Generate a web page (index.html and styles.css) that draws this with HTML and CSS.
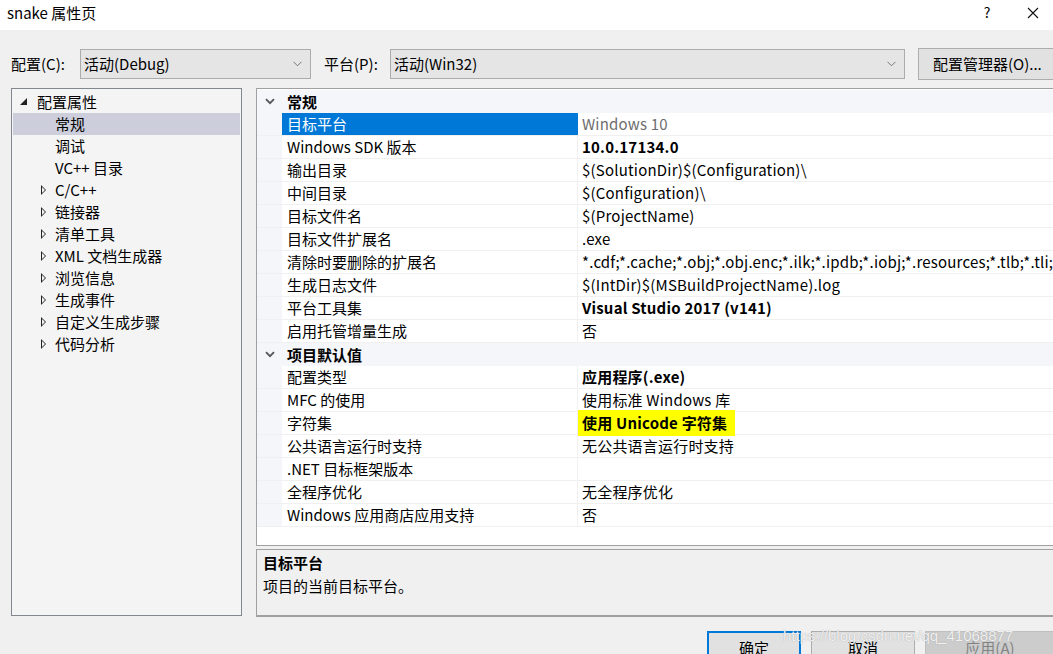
FILE: index.html
```html
<!doctype html>
<html>
<meta name="viewport" content="width=device-width, initial-scale=1">

<head>
  <title>snake 属性页</title>
  <link rel="stylesheet" href="styles.css">
</head>

<body>
  <div class="window">
    <div class="titlebar">
      <span class="title">snake 属性页</span>
      <span class="tb-help">?</span>
      <span class="tb-close">
        <svg width="12" height="12" viewBox="0 0 12 12"><path d="M1 1L11 11M11 1L1 11" stroke="#111" stroke-width="1.1" fill="none" /></svg>
      </span>
    </div>

    <div class="toolbar">
      <label class="lbl">配置(C):</label>
      <div class="combo combo-config">
        <span>活动(Debug)</span>
        <svg class="chev" width="9" height="6" viewBox="0 0 9 6"><path d="M0.5 0.8L4.5 4.8L8.5 0.8" stroke="#777" fill="none" /></svg>
      </div>
      <label class="lbl lbl-platform">平台(P):</label>
      <div class="combo combo-platform">
        <span>活动(Win32)</span>
        <svg class="chev" width="9" height="6" viewBox="0 0 9 6"><path d="M0.5 0.8L4.5 4.8L8.5 0.8" stroke="#777" fill="none" /></svg>
      </div>
      <button class="btn btn-manager">配置管理器(O)...</button>
    </div>

    <div class="main">
      <div class="tree">
        <div class="node root"><span class="tri-open"></span>配置属性</div>
        <div class="node leaf selected">常规</div>
        <div class="node leaf">调试</div>
        <div class="node leaf">VC++ 目录</div>
        <div class="node"><span class="tri"></span>C/C++</div>
        <div class="node"><span class="tri"></span>链接器</div>
        <div class="node"><span class="tri"></span>清单工具</div>
        <div class="node"><span class="tri"></span>XML 文档生成器</div>
        <div class="node"><span class="tri"></span>浏览信息</div>
        <div class="node"><span class="tri"></span>生成事件</div>
        <div class="node"><span class="tri"></span>自定义生成步骤</div>
        <div class="node"><span class="tri"></span>代码分析</div>
      </div>

      <div class="right">
        <div class="grid">
          <div class="cat">
            <span class="gut"><svg width="10" height="7" viewBox="0 0 10 7"><path d="M1 1.2L5 5.2L9 1.2" stroke="#555" stroke-width="1.8" fill="none" /></svg></span>
            <span class="cat-name">常规</span>
          </div>
          <div class="prop sel"><span class="gut"></span><span class="k">目标平台</span><span class="v dim">Windows 10</span></div>
          <div class="prop"><span class="gut"></span><span class="k">Windows SDK 版本</span><span class="v b">10.0.17134.0</span></div>
          <div class="prop"><span class="gut"></span><span class="k">输出目录</span><span class="v">$(SolutionDir)$(Configuration)\</span></div>
          <div class="prop"><span class="gut"></span><span class="k">中间目录</span><span class="v">$(Configuration)\</span></div>
          <div class="prop"><span class="gut"></span><span class="k">目标文件名</span><span class="v">$(ProjectName)</span></div>
          <div class="prop"><span class="gut"></span><span class="k">目标文件扩展名</span><span class="v">.exe</span></div>
          <div class="prop"><span class="gut"></span><span class="k">清除时要删除的扩展名</span><span class="v">*.cdf;*.cache;*.obj;*.obj.enc;*.ilk;*.ipdb;*.iobj;*.resources;*.tlb;*.tli;*.tlh;*.tmp</span></div>
          <div class="prop"><span class="gut"></span><span class="k">生成日志文件</span><span class="v">$(IntDir)$(MSBuildProjectName).log</span></div>
          <div class="prop"><span class="gut"></span><span class="k">平台工具集</span><span class="v b">Visual Studio 2017 (v141)</span></div>
          <div class="prop"><span class="gut"></span><span class="k">启用托管增量生成</span><span class="v">否</span></div>
          <div class="cat">
            <span class="gut"><svg width="10" height="7" viewBox="0 0 10 7"><path d="M1 1.2L5 5.2L9 1.2" stroke="#555" stroke-width="1.8" fill="none" /></svg></span>
            <span class="cat-name">项目默认值</span>
          </div>
          <div class="prop"><span class="gut"></span><span class="k">配置类型</span><span class="v b">应用程序(.exe)</span></div>
          <div class="prop"><span class="gut"></span><span class="k">MFC 的使用</span><span class="v">使用标准 Windows 库</span></div>
          <div class="prop"><span class="gut"></span><span class="k">字符集</span><span class="v b"><span class="mark">使用 Unicode 字符集</span></span></div>
          <div class="prop"><span class="gut"></span><span class="k">公共语言运行时支持</span><span class="v">无公共语言运行时支持</span></div>
          <div class="prop"><span class="gut"></span><span class="k">.NET 目标框架版本</span><span class="v"></span></div>
          <div class="prop"><span class="gut"></span><span class="k">全程序优化</span><span class="v">无全程序优化</span></div>
          <div class="prop"><span class="gut"></span><span class="k">Windows 应用商店应用支持</span><span class="v">否</span></div>
        </div>
        <div class="desc">
          <div class="desc-title">目标平台</div>
          <div class="desc-text">项目的当前目标平台。</div>
        </div>
      </div>
    </div>

    <div class="buttons">
      <button class="btn btn-ok">确定</button>
      <button class="btn btn-cancel">取消</button>
      <button class="btn btn-apply">应用(A)</button>
      <span class="watermark">https://blog.csdn.net/qq_41068877</span>
    </div>
  </div>
</body>

</html>
```

FILE: styles.css
```css
/* Dialog shell */
body {
  margin: 0;
  background: #f0f0f0;
  font: 15px "Segoe UI", "Noto Sans CJK SC", sans-serif;
  color: #000;
  overflow: hidden;
}

.window {
  width: 1053px;
  height: 654px;
  overflow: hidden;
  position: relative;
}

.titlebar {
  height: 30px;
  background: #fff;
  display: flex;
  align-items: flex-start;
  padding-left: 7px;
}

.title {
  margin-top: 2px;
  flex: 1;
  font-size: 15px;
}

.tb-help {
  margin-top: 2px;
  width: 48px;
  font-size: 14px;
  text-align: center;
  margin-right: 2px;
}

.tb-close {
  width: 40px;
  padding-top: 7px;
  display: flex;
  justify-content: center;
}

/* Config / platform row */
.toolbar {
  display: flex;
  align-items: center;
  padding: 18px 0 0 11px;
  height: 31px;
}

.toolbar > * {
  flex-shrink: 0;
}

.lbl {
  width: 69px;
}

.lbl-platform {
  margin-left: 13px;
  width: 66px;
}

.combo {
  border: 1px solid #acacac;
  background: #e5e5e5;
  display: flex;
  align-items: center;
  padding-left: 3px;
  box-sizing: border-box;
  height: 30px;
}

.combo span {
  flex: 1;
}

.combo .chev {
  margin-right: 8px;
}

.combo-config {
  width: 231px;
}

.combo-platform {
  width: 515px;
}

.btn {
  font: 15px "Segoe UI", "Noto Sans CJK SC", sans-serif;
  background: #e1e1e1;
  border: 1px solid #adadad;
  color: #000;
  padding: 0;
}

.btn-manager {
  margin-left: 13px;
  width: 145px;
  height: 32px;
  text-align: left;
  padding-left: 14px;
}

/* Tree + grid */
.main {
  display: flex;
  padding: 9px 0 0 11px;
  gap: 14px;
}

.tree {
  width: 231px;
  height: 528px;
  box-sizing: border-box;
  border: 1px solid #828790;
  background: #f4f4f4;
  padding: 2px 1px 0 1px;
  flex-shrink: 0;
}

.node {
  height: 22px;
  line-height: 22px;
  padding-left: 28px;
  display: flex;
  align-items: center;
  white-space: nowrap;
}

.node.root {
  padding-left: 7px;
}

.node.leaf {
  padding-left: 42px;
}

.node.selected {
  background: #cccedb;
}

.tri {
  width: 0;
  height: 0;
  border-top: 5px solid transparent;
  border-bottom: 5px solid transparent;
  border-left: 5px solid #222;
  position: relative;
  margin-right: 9px;
}

.tri::after {
  content: "";
  position: absolute;
  left: -4px;
  top: -3px;
  border-top: 3px solid transparent;
  border-bottom: 3px solid transparent;
  border-left: 3px solid #f4f4f4;
}

.tri-open {
  width: 0;
  height: 0;
  border-left: 7px solid transparent;
  border-bottom: 7px solid #222;
  margin-right: 10px;
  margin-top: -2px;
}

.right {
  width: 797px;
  flex-shrink: 0;
  display: flex;
  flex-direction: column;
}

.grid {
  height: 458px;
  box-sizing: border-box;
  border: 1px solid #a0a0a0;
  border-right: none;
  background: #fff;
  padding-top: 1px;
  overflow: hidden;
}

.cat,
.prop {
  display: flex;
  height: 23px;
  box-sizing: border-box;
  white-space: nowrap;
}

.cat {
  background: #f4f6fa;
  align-items: center;
}

.cat-name {
  font-weight: bold;
  padding-left: 5px;
}

.gut {
  width: 25px;
  flex-shrink: 0;
  align-self: stretch;
  background: #f4f6fa;
  display: flex;
  align-items: center;
  justify-content: center;
}

.prop {
  border-bottom: 1px solid #f0f0f0;
  line-height: 22px;
}

.k {
  width: 296px;
  flex-shrink: 0;
  padding-left: 5px;
  box-sizing: border-box;
  border-right: 1px solid #f0f0f0;
}

.v {
  padding-left: 4px;
  letter-spacing: 0.2px;
}

.b {
  font-weight: bold;
}

.dim {
  color: #6d6d6d;
}

.prop.sel .k {
  background: #0078d7;
  color: #fff;
  border-right-color: #0078d7;
}

.mark {
  background: #ffff00;
  padding: 2px 8px 3px 4px;
  margin-left: -4px;
}

.desc {
  margin-top: 3px;
  height: 68px;
  box-sizing: border-box;
  border: 1px solid #a0a0a0;
  border-bottom-width: 2px;
  border-right: none;
  padding: 2px 0 0 6px;
}

.desc-title {
  font-weight: bold;
  line-height: 22px;
}

.desc-text {
  line-height: 24px;
}

/* Bottom buttons */
.buttons {
  display: flex;
  padding: 14px 0 0 707px;
  gap: 10px;
}

.buttons .btn {
  height: 30px;
  flex-shrink: 0;
  padding-top: 2px;
}

.btn-ok {
  width: 94px;
  border: 2px solid #0078d7;
}

.btn-cancel {
  width: 104px;
}

.btn-apply {
  width: 130px;
  background: #cccccc;
  border-color: #bfbfbf;
  color: #838383;
}

.watermark {
  position: absolute;
  left: 783px;
  top: 627px;
  font: 15px Arial, "Liberation Sans", sans-serif;
  color: rgba(255, 255, 255, 0.85);
  text-shadow: 0 0 1px #999;
}
```
